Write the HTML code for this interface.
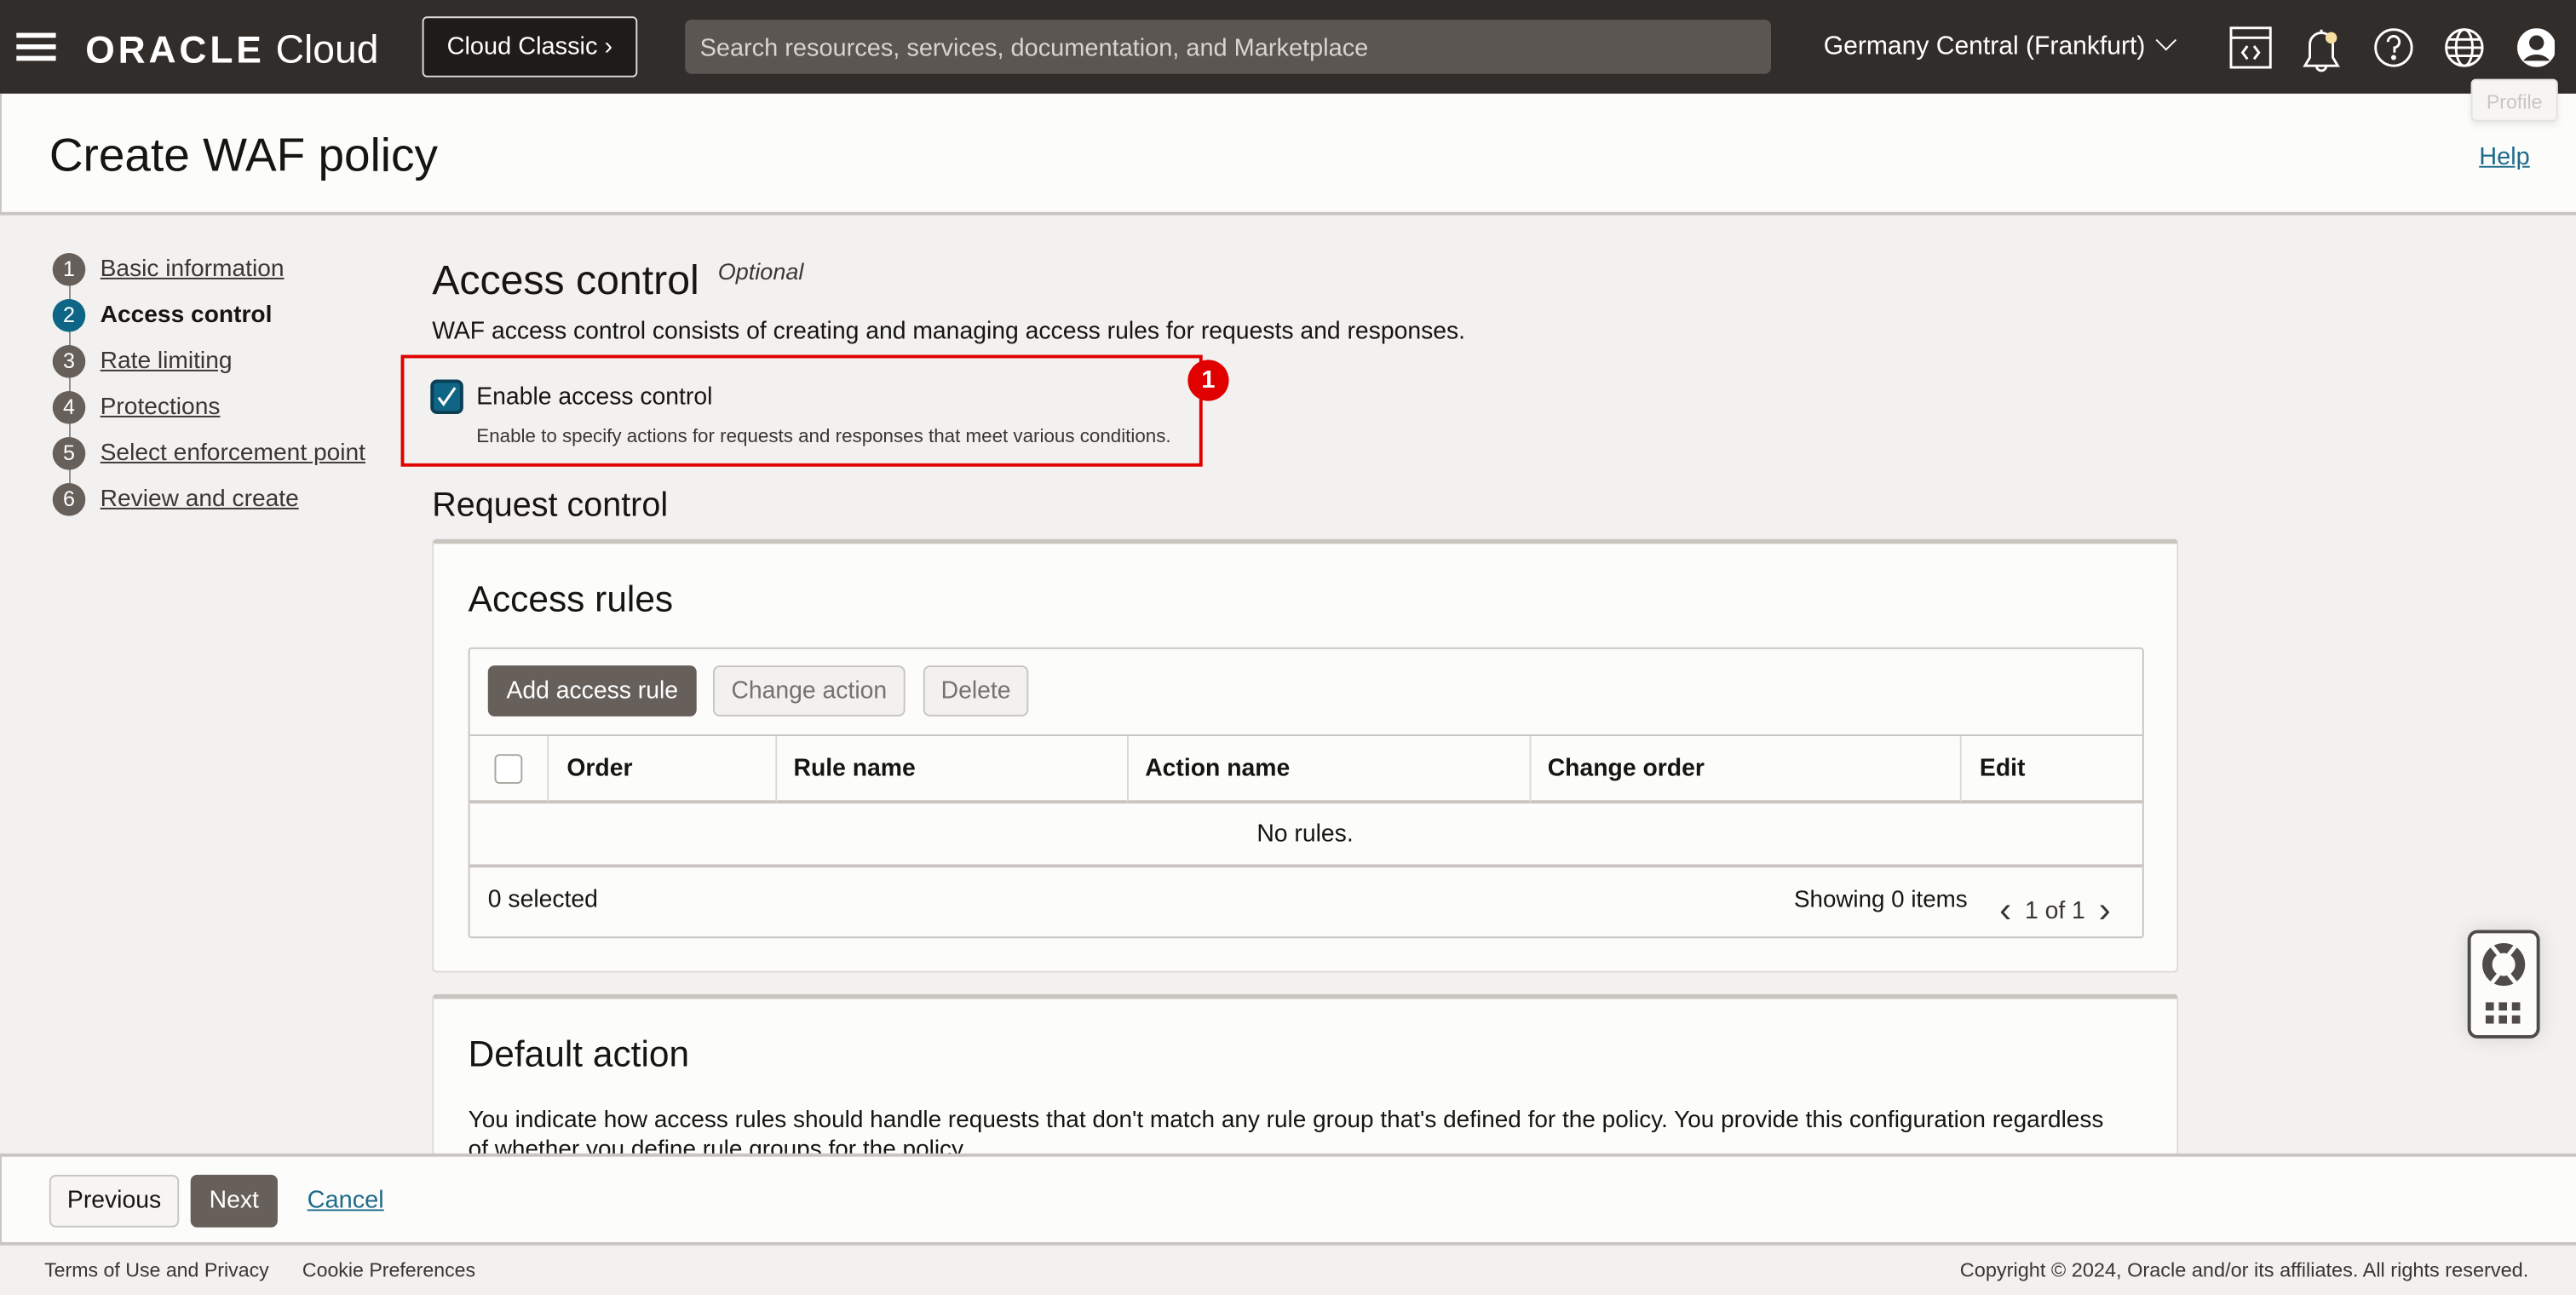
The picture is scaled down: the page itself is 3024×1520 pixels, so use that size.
<!DOCTYPE html>
<html><head><meta charset="utf-8"><style>
*{box-sizing:border-box;margin:0;padding:0}
html,body{width:3024px;height:1520px;overflow:hidden;background:#f2f1ef;font-family:"Liberation Sans",Arial,sans-serif;color:#161513}
#w{position:absolute;left:0;top:0;width:1568px;height:788px;transform:scale(1.92857);transform-origin:0 0;background:#f2f1ef}
.a{position:absolute;white-space:nowrap}
.hdr{left:0;top:0;width:1568px;height:57px;background:#312d2a}
.btn{position:absolute;border-radius:4px;font-size:14.7px;display:flex;align-items:center;justify-content:center}
.step{position:absolute;left:32px;width:20px;height:20px;border-radius:50%;background:#665f5a;color:#fff;font-size:13px;text-align:center;line-height:20px}
.sl{position:absolute;left:61px;font-size:14.6px;text-decoration:underline;color:#3a3632}
.th{position:absolute;top:460px;font-size:14.7px;font-weight:bold}
.vl{position:absolute;top:448px;width:1px;height:40px;background:#dcd9d5}
</style></head><body><div id="w">
<div class="a hdr"></div>
<div class="a" style="left:10px;top:20px;width:24px;height:3px;background:#fff;box-shadow:0 7px 0 #fff,0 14px 0 #fff"></div>
<div class="a" style="left:52px;top:17px;color:#fff;font-size:23px;font-weight:bold;letter-spacing:2px">ORACLE<span style="font-weight:normal;letter-spacing:0;font-size:24px"> Cloud</span></div>
<div class="a" style="left:257px;top:10px;width:131px;height:37px;border:1px solid #ddd;border-radius:3px;background:#1e1b19;color:#fff;font-size:15px;line-height:35px;padding-left:14px">Cloud Classic &#x203A;</div>
<div class="a" style="left:417px;top:12px;width:661px;height:33px;border-radius:4px;background:#5b5652;color:#d8d4d0;font-size:15px;line-height:35px;padding-left:9px">Search resources, services, documentation, and Marketplace</div>
<div class="a" style="left:1110px;top:20px;color:#fff;font-size:15.6px">Germany Central (Frankfurt) <span style="display:inline-block;width:9px;height:9px;border-right:1.5px solid #fff;border-bottom:1.5px solid #fff;transform:rotate(45deg);margin:0 4px 4px 4px"></span></div>
<svg class="a" style="left:1355px;top:14px" width="200" height="32" viewBox="0 0 200 32" fill="none" stroke="#fff" stroke-width="1.5">
<rect x="3" y="3" width="24" height="24"/><line x1="3" y1="9" x2="27" y2="9"/><path d="M13 14l-3 4 3 4M17 14l3 4-3 4"/>
<path d="M48 26h20l-3-5v-8a7 7 0 0 0-14 0v8z M55 26a3 3 0 0 0 6 0 M58 6v-2"/><circle cx="64" cy="9" r="3.5" fill="#f6dfa0" stroke="none"/>
<circle cx="102" cy="15" r="11"/><path d="M98.5 11.5a3.5 3.5 0 1 1 4 3.5v3" /><circle cx="102" cy="21" r=".8" fill="#fff"/>
<circle cx="145" cy="15" r="11"/><ellipse cx="145" cy="15" rx="5" ry="11"/><path d="M134 15h22M135.5 10h19M135.5 20h19"/>
<circle cx="189" cy="15" r="11" fill="#fff"/><circle cx="189" cy="12" r="4.5" fill="#312d2a" stroke="none"/><path d="M181 23a9 7 0 0 1 16 0" fill="#312d2a" stroke="none"/></svg>
<div class="a" style="left:0;top:57px;width:1568px;height:74px;background:#fcfcfb;border-bottom:2px solid #c9c5c0;border-left:1px solid #c9c5c0"></div>
<div class="a" style="left:1504px;top:48px;width:53px;height:26px;border:1px solid #e5e2de;border-radius:3px;background:#f6f5f3;color:#c9c6c2;font-size:12px;line-height:26px;text-align:center;box-shadow:0 2px 4px rgba(0,0,0,.08)">Profile</div>
<div class="a" style="left:30px;top:79px;font-size:28.5px">Create WAF policy</div>
<div class="a" style="left:1509px;top:87px;font-size:15px;color:#1e6c8c;text-decoration:underline">Help</div>
<div class="a" style="left:41.5px;top:164px;width:1px;height:140px;background:#8f8a86"></div>
<div class="step" style="top:154px">1</div><div class="sl" style="top:156px">Basic information</div>
<div class="step" style="top:182px;background:#0e6585">2</div><div class="sl" style="top:184px;text-decoration:none;font-weight:bold;color:#161513">Access control</div>
<div class="step" style="top:210px">3</div><div class="sl" style="top:212px">Rate limiting</div>
<div class="step" style="top:238px">4</div><div class="sl" style="top:240px">Protections</div>
<div class="step" style="top:266px">5</div><div class="sl" style="top:268px">Select enforcement point</div>
<div class="step" style="top:294px">6</div><div class="sl" style="top:296px">Review and create</div>
<div class="a" style="left:263px;top:157px;font-size:25px">Access control</div>
<div class="a" style="left:437px;top:157px;font-size:14px;font-style:italic;color:#3a3632">Optional</div>
<div class="a" style="left:263px;top:194px;font-size:14.7px">WAF access control consists of creating and managing access rules for requests and responses.</div>
<div class="a" style="left:244px;top:216px;width:488px;height:68px;border:2.5px solid #e00000"></div>
<div class="a" style="left:262px;top:231px;width:20px;height:21px;border-radius:4px;background:#0e6585;border:2px solid #0b3f55"><svg width="16" height="17" viewBox="0 0 16 17"><path d="M3 9l3 4 7-10" fill="none" stroke="#fff" stroke-width="1.6"/></svg></div>
<div class="a" style="left:290px;top:234px;font-size:14.7px">Enable access control</div>
<div class="a" style="left:290px;top:259px;font-size:11.6px;color:#3a3632">Enable to specify actions for requests and responses that meet various conditions.</div>
<div class="a" style="left:723px;top:219px;width:25px;height:25px;border-radius:50%;background:#e00000;color:#fff;font-size:15px;font-weight:bold;text-align:center;line-height:25px">1</div>
<div class="a" style="left:263px;top:296px;font-size:20.5px">Request control</div>
<div class="a" style="left:263px;top:328px;width:1063px;height:264px;background:#fcfcfb;border:1px solid #dcd9d5;border-top:3px solid #c9c5c0;border-radius:3px"></div>
<div class="a" style="left:285px;top:352px;font-size:22px">Access rules</div>
<div class="a" style="left:285px;top:394px;width:1020px;height:177px;border:1px solid #c9c5c0;border-radius:2px;background:#fcfcfb"></div>
<div class="btn" style="left:297px;top:405px;width:127px;height:31px;background:#665f5a;color:#fff">Add access rule</div>
<div class="btn" style="left:434px;top:405px;width:117px;height:31px;background:#f2f1ef;border:1px solid #c9c5c0;color:#76716c">Change action</div>
<div class="btn" style="left:562px;top:405px;width:64px;height:31px;background:#f2f1ef;border:1px solid #c9c5c0;color:#76716c">Delete</div>
<div class="a" style="left:286px;top:447px;width:1018px;height:1px;background:#c9c5c0"></div>
<div class="a" style="left:286px;top:487px;width:1018px;height:1.5px;background:#c9c5c0"></div>
<div class="a" style="left:286px;top:526px;width:1018px;height:1.5px;background:#c9c5c0"></div>
<div class="vl" style="left:333px"></div><div class="vl" style="left:472px"></div><div class="vl" style="left:686px"></div><div class="vl" style="left:931px"></div><div class="vl" style="left:1193px"></div>
<div class="a" style="left:301px;top:459px;width:17px;height:18px;border:1px solid #a9a5a0;border-radius:3px;background:#fff"></div>
<div class="th" style="left:345px">Order</div><div class="th" style="left:483px">Rule name</div><div class="th" style="left:697px">Action name</div><div class="th" style="left:942px">Change order</div><div class="th" style="left:1205px">Edit</div>
<div class="a" style="left:765px;top:500px;font-size:14.7px">No rules.</div>
<div class="a" style="left:297px;top:540px;font-size:14.7px">0 selected</div>
<div class="a" style="left:1092px;top:540px;font-size:14.4px">Showing 0 items</div>
<div class="a" style="left:1217px;top:539px;font-size:14.7px;color:#3a3632"><span style="font-size:22px;position:relative;top:2px">&#x2039;</span>&nbsp;&nbsp;1 of 1&nbsp;&nbsp;<span style="font-size:22px;position:relative;top:2px">&#x203A;</span></div>
<div class="a" style="left:263px;top:605px;width:1063px;height:110px;background:#fcfcfb;border:1px solid #dcd9d5;border-top:3px solid #c9c5c0;border-radius:3px"></div>
<div class="a" style="left:285px;top:629px;font-size:22px">Default action</div>
<div class="a" style="left:285px;top:673px;font-size:14.5px;line-height:18px">You indicate how access rules should handle requests that don't match any rule group that's defined for the policy. You provide this configuration regardless<br>of whether you define rule groups for the policy.</div>
<div class="a" style="left:1502px;top:566px;width:44px;height:66px;border:2.5px solid #4f4b48;border-radius:6px;background:#fcfcfb;box-shadow:0 0 12px rgba(0,0,0,.12)"><svg width="40" height="62" viewBox="0 0 40 62"><circle cx="20" cy="19" r="13" fill="#4f4b48"/><circle cx="20" cy="19" r="7" fill="#fcfcfb"/><path d="M13 8l4 5M27 8l-4 5M13 30l4-5M27 30l-4-5" stroke="#fcfcfb" stroke-width="2.5"/><g fill="#4f4b48"><rect x="9" y="42" width="5" height="5"/><rect x="17" y="42" width="5" height="5"/><rect x="25" y="42" width="5" height="5"/><rect x="9" y="50" width="5" height="5"/><rect x="17" y="50" width="5" height="5"/><rect x="25" y="50" width="5" height="5"/></g></svg></div>
<div class="a" style="left:0;top:702px;width:1568px;height:56px;background:#fcfcfb;border-top:2px solid #c9c5c0;border-bottom:2px solid #c9c5c0;border-left:1px solid #c9c5c0"></div>
<div class="btn" style="left:30px;top:715px;width:79px;height:32px;background:#f6f5f3;border:1px solid #c9c5c0">Previous</div>
<div class="btn" style="left:116px;top:715px;width:53px;height:32px;background:#665f5a;color:#fff">Next</div>
<div class="a" style="left:187px;top:722px;font-size:15px;color:#1e6c8c;text-decoration:underline">Cancel</div>
<div class="a" style="left:0;top:758px;width:1568px;height:30px;background:#f2f1ef"></div>
<div class="a" style="left:27px;top:766px;font-size:12px;color:#3a3632">Terms of Use and Privacy</div>
<div class="a" style="left:184px;top:766px;font-size:12px;color:#3a3632">Cookie Preferences</div>
<div class="a" style="left:1193px;top:766px;font-size:12.2px;color:#3a3632">Copyright © 2024, Oracle and/or its affiliates. All rights reserved.</div>
</div></body></html>
